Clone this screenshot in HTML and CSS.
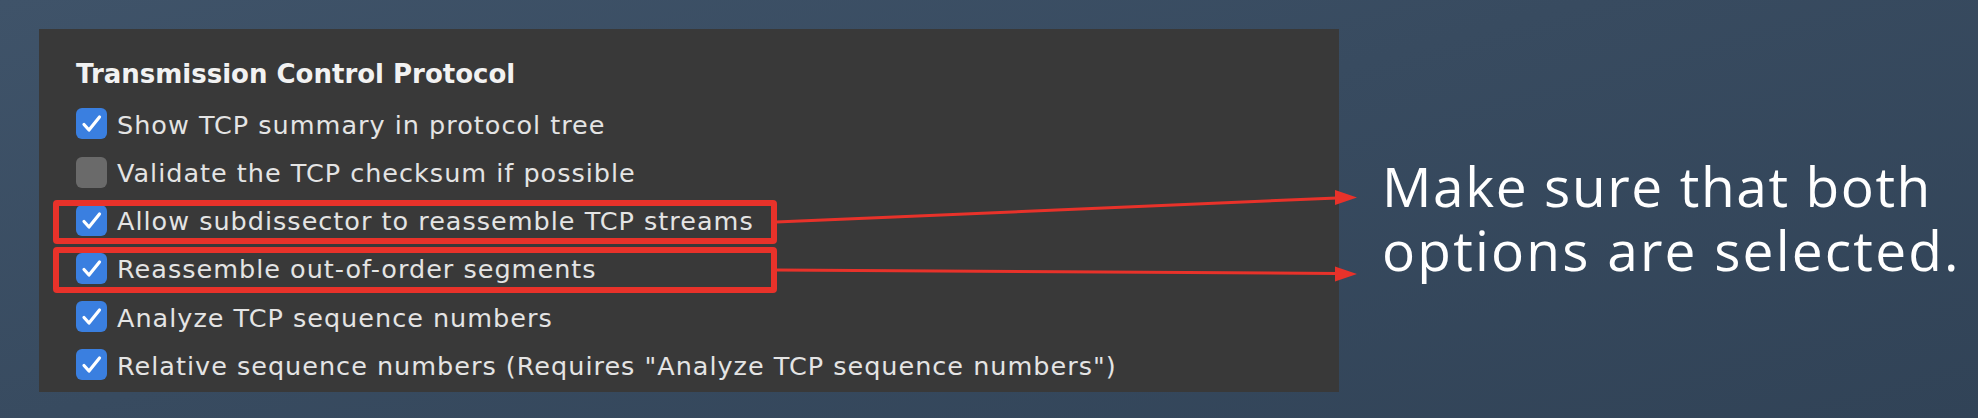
FILE: index.html
```html
<!DOCTYPE html>
<html>
<head>
<meta charset="utf-8">
<link rel="stylesheet" href="styles.css">
</head>
<body>
<div class="page">
  <section class="panel">
    <h2 class="title">Transmission Control Protocol</h2>
    <ul class="opts">
      <li class="opt"><span class="cb on"><svg viewBox="0 0 31 31"><path d="M8 16.5 L13 22 L23.5 9"/></svg></span><span class="label">Show TCP summary in protocol tree</span></li>
      <li class="opt"><span class="cb"></span><span class="label">Validate the TCP checksum if possible</span></li>
      <li class="opt hl"><span class="cb on"><svg viewBox="0 0 31 31"><path d="M8 16.5 L13 22 L23.5 9"/></svg></span><span class="label">Allow subdissector to reassemble TCP streams</span></li>
      <li class="opt hl hl2"><span class="cb on"><svg viewBox="0 0 31 31"><path d="M8 16.5 L13 22 L23.5 9"/></svg></span><span class="label">Reassemble out-of-order segments</span></li>
      <li class="opt"><span class="cb on"><svg viewBox="0 0 31 31"><path d="M8 16.5 L13 22 L23.5 9"/></svg></span><span class="label">Analyze TCP sequence numbers</span></li>
      <li class="opt"><span class="cb on"><svg viewBox="0 0 31 31"><path d="M8 16.5 L13 22 L23.5 9"/></svg></span><span class="label">Relative sequence numbers (Requires "Analyze TCP sequence numbers")</span></li>
    </ul>
  </section>
  <p class="note"><span class="note-line">Make sure that both</span><span class="note-line note-line-2">options are selected.</span></p>
  <svg class="arrows" viewBox="0 0 1978 418" width="1978" height="418">
    <line x1="776" y1="222" x2="1337" y2="198"/>
    <polygon points="1335,190 1357,197.5 1335,205"/>
    <line x1="776" y1="270" x2="1337" y2="273.5"/>
    <polygon points="1335,266.5 1357,274 1335,281.5"/>
  </svg>
</div>
</body>
</html>
```
FILE: styles.css
```css
html, body {
  margin: 0;
  padding: 0;
}
body {
  width: 1978px;
  height: 418px;
  overflow: hidden;
  background: linear-gradient(165deg, #3f5369 0%, #384b60 45%, #314357 100%);
}
.page {
  position: relative;
  display: flex;
  align-items: flex-start;
  padding: 29px 0 0 39px;
  height: 418px;
  box-sizing: border-box;
}
.panel {
  flex: none;
  width: 1300px;
  height: 363px;
  box-sizing: border-box;
  background: #393939;
  padding: 30px 0 0 37px;
  font-family: "DejaVu Sans", Inter, sans-serif;
  color: #e4e4e4;
}
.title {
  margin: 0;
  font-size: 26px;
  line-height: 30px;
  font-weight: 700;
  color: #f2f2f2;
}
.opts {
  list-style: none;
  margin: 10.8px 0 0;
  padding: 0;
}
.opt {
  position: relative;
  display: flex;
  align-items: center;
  height: 48.2px;
  gap: 10px;
}
.cb {
  flex: none;
  width: 31px;
  height: 31px;
  border-radius: 6px;
  background: #6a6a6a;
  display: flex;
}
.cb.on {
  background: #3a7fe0;
}
.cb svg {
  width: 31px;
  height: 31px;
}
.cb svg path {
  fill: none;
  stroke: #ffffff;
  stroke-width: 3.2;
  stroke-linecap: round;
  stroke-linejoin: round;
}
.label {
  font-size: 25.5px;
  letter-spacing: 1px;
  line-height: 30px;
  white-space: nowrap;
  position: relative;
  top: 1px;
}
.opt.hl::before {
  content: "";
  position: absolute;
  left: -23px;
  top: 4px;
  width: 724px;
  height: 44px;
  border: 6px solid #e8322a;
  border-radius: 4px;
  box-sizing: border-box;
}
.opt.hl2::before {
  top: 3px;
  height: 46px;
}
.note {
  flex: none;
  margin: 125px 0 0 43px;
  font-family: "Open Sans", Lato, sans-serif;
  font-weight: 400;
  font-size: 55px;
  letter-spacing: 1.6px;
  line-height: 64px;
  color: #ffffff;
  white-space: nowrap;
}
.note-line {
  display: block;
}
.note-line-2 {
  letter-spacing: 2.2px;
}
.arrows {
  position: absolute;
  left: 0;
  top: 0;
  pointer-events: none;
}
.arrows line {
  stroke: #e8322a;
  stroke-width: 3;
}
.arrows polygon {
  fill: #e8322a;
}
```
